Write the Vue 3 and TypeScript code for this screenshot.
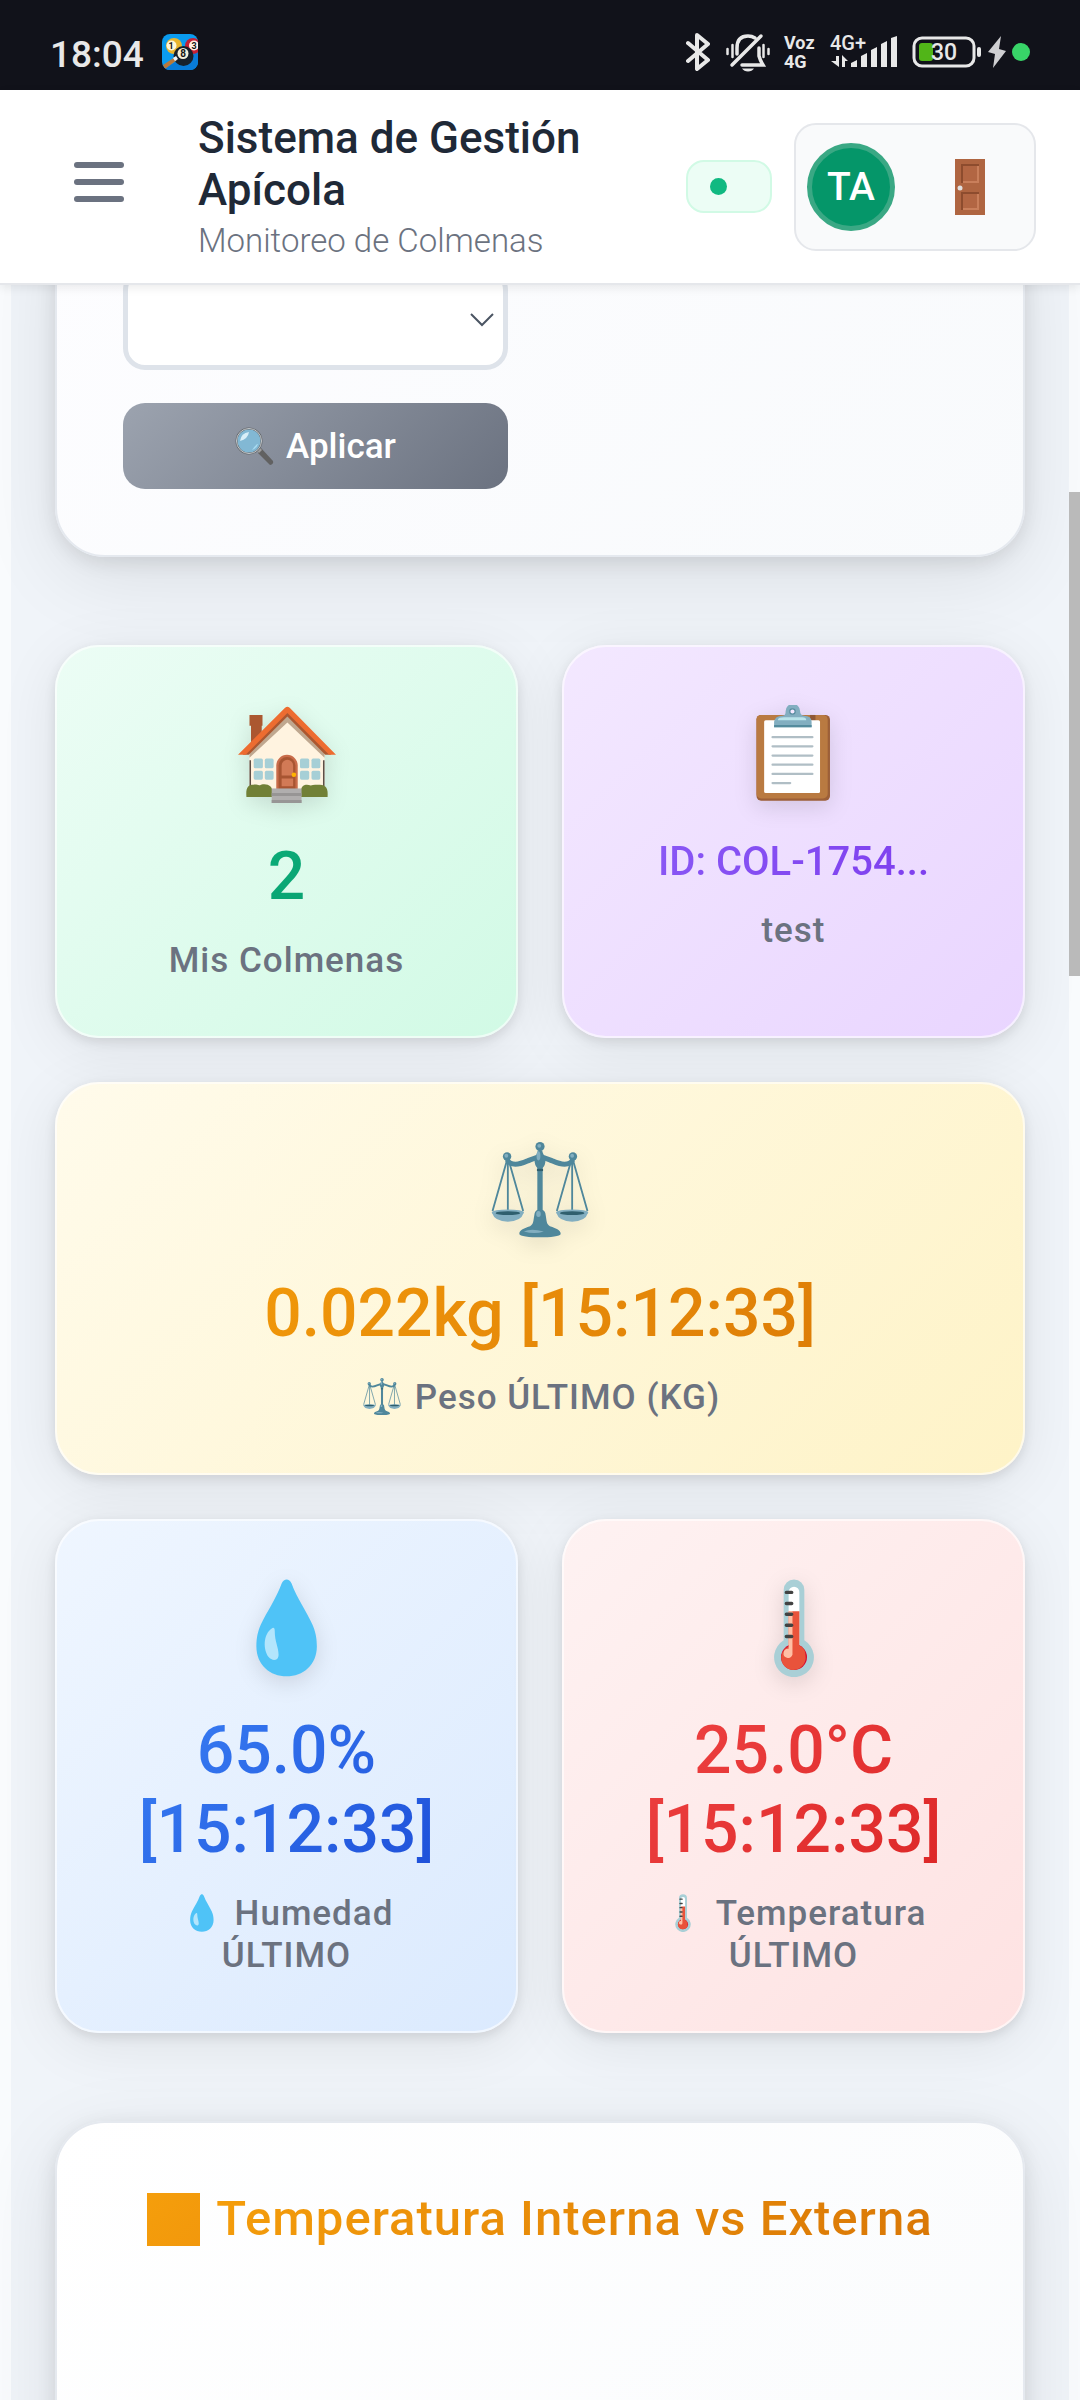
<script setup lang="ts">
import { ref } from 'vue'

interface StatCard {
  kind: 'hives' | 'hive' | 'weight' | 'humidity' | 'temperature'
  icon: string
  value: string
  label: string
  labelIcon?: string
}

const stats: StatCard[] = [
  { kind: 'hives', icon: 'house', value: '2', label: 'Mis Colmenas' },
  { kind: 'hive', icon: 'clipboard', value: 'ID: COL-1754...', label: 'test' },
  { kind: 'weight', icon: 'scales', value: '0.022kg [15:12:33]', label: 'Peso ÚLTIMO (KG)', labelIcon: 'scales' },
  { kind: 'humidity', icon: 'drop', value: '65.0% [15:12:33]', label: 'Humedad ÚLTIMO', labelIcon: 'drop' },
  { kind: 'temperature', icon: 'thermometer', value: '25.0°C [15:12:33]', label: 'Temperatura ÚLTIMO', labelIcon: 'thermometer' },
]

const filter = ref('')
</script>

<template>
  <div class="screen">
    <svg class="sprite" aria-hidden="true">
      <symbol id="house" viewBox="0 0 128 128">
        <path d="M15 13h17v14h-1v30H17V27h-2z" fill="#ab5730" />
        <path d="M15 66 64.500 22 113 66v46H15z" fill="#fff3e0" />
        <path d="M15 72h2v34h-2zM111 72h2v34h-2z" fill="#5d4e46" />
        <path d="M64.500 14 15 60v9l49.500-46L113 69v-9z" fill="#bfa78f" />
        <path d="M64.500 8 6 65h8l50.500-50L114 65h8z" fill="#ab5730" />
        <path d="M61.500 3.500q3-2.500 6 0L128 65h-9L64.500 10.500 10 65H0z" fill="#ed6c30" />
        <g fill="#a6cfd6">
          <rect x="20.500" y="70" width="12" height="12.500" rx="2" /><rect x="35" y="70" width="11.500" height="12.500" rx="2" />
          <rect x="20.500" y="86" width="12" height="11.500" rx="2" /><rect x="35" y="86" width="11.500" height="11.500" rx="2" />
          <rect x="81" y="70" width="12" height="12.500" rx="2" /><rect x="96" y="70" width="11.500" height="12.500" rx="2" />
          <rect x="81" y="86" width="12" height="11.500" rx="2" /><rect x="96" y="86" width="11.500" height="11.500" rx="2" />
        </g>
        <path d="M50 110V79a14 14 0 0 1 28 0v31z" fill="#c96c4a" />
        <path d="M53 110V79a11 11 0 0 1 22 0v31z" fill="#a85532" />
        <path d="M57 92V79a7 7 0 0 1 15 0v13zM57 96h15v10H57z" fill="#d27a56" />
        <circle cx="73" cy="91" r="3" fill="#ffb300" />
        <path d="M11 120c-1-12 2-16 9-16 5-1 7 2 10 0 9-2 15 2 15 9v7zM82 120v-8c1-8 7-9 13-7 4-1 7-1 12-1 8 0 11 5 10 16z" fill="#718036" />
        <path d="M44 109h39v19H44z" fill="#b0aeae" /><path d="M44 115h39v4H44zM44 124h39v4H44z" fill="#979595" />
      </symbol>
      <symbol id="clipboard" viewBox="0 0 128 128">
        <rect x="15" y="13" width="96" height="112" rx="6" fill="#9c5f38" />
        <rect x="15" y="13" width="93" height="109" rx="6" fill="#b97a41" />
        <path d="M85 13h7v16h-7z" fill="#8f5835" />
        <rect x="25" y="20" width="73" height="95" rx="2" fill="#fff" />
        <path d="M36 42h52M36 54h52M36 66h52M36 78h52M36 90h52M36 102h23" stroke="#b0bec5" stroke-width="3" stroke-linecap="round" />
        <path d="M38 29v-7q1-8 11-8c4-1 4-3 4-6a9.500 9.500 0 0 1 19 0c0 3 1 5 5 6q10 0 10 8v7z" fill="#82aec0" />
        <path d="M38 26h49v3H38z" fill="#548b9d" /><path d="M43 19q1-3 8-3h24q5 0 5 4H43z" fill="#b9e4ea" />
        <circle cx="62" cy="8.500" r="3.500" fill="#f3e8ff" stroke="#548b9d" stroke-width="1.500" />
      </symbol>
      <symbol id="scales" viewBox="0 0 128 128">
        <g fill="none" stroke="#4f879b">
          <path d="M22 20 2 90M22 20v72M22 20l20 70M106 20 86 90M106 20v72M106 20l20 70" stroke-width="2.400" />
          <path d="M21 23c5 9 17 6 26 2 8-3 11-5 17-5s9 2 17 5c9 4 21 7 26-2" stroke-width="6.500" />
          <path d="M64 30v64" stroke-width="7" />
        </g>
        <path d="M1 92h42q-4 12-21 12T1 92zM85 92h42q-4 12-21 12T85 92z" fill="#82aec0" />
        <ellipse cx="22" cy="92" rx="21" ry="4" fill="#82aec0" /><ellipse cx="106" cy="92" rx="21" ry="4" fill="#82aec0" />
        <ellipse cx="22" cy="93" rx="16" ry="2.500" fill="#2f5f6e" /><ellipse cx="106" cy="93" rx="16" ry="2.500" fill="#2f5f6e" />
        <circle cx="21" cy="19" r="5.500" fill="#4f879b" /><circle cx="107" cy="19" r="5.500" fill="#4f879b" />
        <circle cx="64" cy="6" r="6" fill="#4f879b" /><path d="M61 11h6c0 5 5 7 4 15q-1 8-7 9-6-1-7-9c-1-8 4-10 4-15z" fill="#4f879b" />
        <path d="M60 35h8v3h-8z" fill="#2f5f6e" />
        <path d="M57 93q1-5 7-5t7 5c2 10 1 14 6 17 9 3 14 5 14 10 0 6-54 6-54 0 0-5 5-7 14-10 5-3 4-7 6-17z" fill="#4f879b" />
        <path d="M43 117q9-5 26 0-12 4-26 0z" fill="#82aec0" /><ellipse cx="62" cy="94" rx="3" ry="4" fill="#82aec0" /><ellipse cx="62" cy="18" rx="2.500" ry="6" fill="#82aec0" />
        <circle cx="63" cy="5" r="2.500" fill="#82aec0" /><circle cx="20" cy="18" r="2.500" fill="#82aec0" /><circle cx="106" cy="18" r="2.500" fill="#82aec0" />
      </symbol>
      <symbol id="drop" viewBox="0 0 128 128">
        <path d="M57 6c3-7 10-7 13 0 7 19 19 36 27 53 4 9 6 17 6 29 0 24-18 39-39.500 39S24 112 24 88c0-12 2-20 6-29C38 43 50 25 57 6z" fill="#4fc3f7" />
        <path d="M45 64q3-1 3 4c0 14 5 21 5 31 0 9-9 8-13 3-7-9-8-30 5-38z" fill="#b3e5fc" />
      </symbol>
      <symbol id="thermometer" viewBox="0 0 128 128">
        <path d="M50.500 14a13.500 13.500 0 0 1 27 0v66a26 26 0 1 1-27 0z" fill="#a9cfd6" />
        <path d="M57 17a7 7 0 0 1 14 0v70H57z" fill="#fff" />
        <circle cx="64" cy="102" r="17" fill="#d50f30" />
        <path d="M57 88V42h14v45q8 4 8 13a16 16 0 1 1-22-12z" fill="#e9533b" />
        <path d="M57 42h5v57a6 6 0 1 1-5-8z" fill="#ffbfa5" />
        <path d="M54 17.500h7M54 32h7M54 46h7M54 60.500h7M54 75h7" stroke="#424242" stroke-width="4.500" stroke-linecap="round" />
      </symbol>
    </svg>

    <div class="status">
      <span class="clock">18:04</span>
      <svg class="game" width="36" height="36" viewBox="0 0 36 36" role="img" aria-label="Billar">
        <defs><clipPath id="game-clip"><rect width="36" height="36" rx="8" /></clipPath></defs>
        <g clip-path="url(#game-clip)">
          <path d="M0 0h36v36H0z" fill="#0a9bef" /><path d="M0 36 36 14v22z" fill="#087bd8" />
          <circle cx="12" cy="12" r="8" fill="#e9b52e" /><circle cx="9.500" cy="11.500" r="5" fill="#fff7d8" />
          <circle cx="31" cy="12" r="8" fill="#c32035" /><circle cx="32" cy="11.500" r="5" fill="#fff0e6" />
          <circle cx="21.500" cy="22" r="10" fill="#17202b" /><circle cx="21" cy="19.500" r="5.500" fill="#f3efd9" />
          <path d="m1 31 12-8 2 3L3 35z" fill="#ba7839" /><path d="m11 24 3-2 2 3-3 2z" fill="#eef4f8" />
          <g font-family="Roboto, sans-serif" font-weight="700" text-anchor="middle" fill="#161616">
            <text x="9" y="15" font-size="9">1</text><text x="32" y="15" font-size="9">3</text><text x="21" y="23" font-size="10">8</text>
          </g>
        </g>
      </svg>
      <div class="system">
        <svg width="24" height="40" viewBox="0 0 24 40" fill="none" stroke="#e8e8e8" stroke-width="4" stroke-linejoin="round" stroke-linecap="round" role="img" aria-label="Bluetooth">
          <path d="m2 11 20 17-11 9V3l11 9L2 29" />
        </svg>
        <svg class="bell" width="44" height="40" viewBox="0 0 44 40" fill="none" stroke="#e8e8e8" stroke-linecap="round" role="img" aria-label="Silencio">
          <path d="M11 22v-6C11 8 15 4 22 4q4 0 7 2M33 16v8q1 4 4 9H16" stroke-width="3.500" />
          <path d="M6 33 35 4" stroke-width="3.500" />
          <path d="M1.500 17v5M6.500 13v12M37.500 13v12M42.500 17v5" stroke-width="2.500" />
          <path d="M16 36.500h12q-2 3-6 3t-6-3z" fill="#e8e8e8" stroke="none" />
        </svg>
        <span class="volte"><span>Voz</span><span>4G</span></span>
        <div class="signal">
          <span>4G+</span>
          <svg width="68" height="32" viewBox="0 0 68 32" fill="#e8e8e8" aria-hidden="true">
            <path d="m21 27 6-3v7h-6zM31 20l6-3v14h-6zM41 14l6-3v20h-6zM51 8l6-3v26h-6zM61 2l6-2v31h-6z" />
            <path d="M6 20h3v11L1 25h5zM12 31h3v-6h3l-6-6z" />
          </svg>
        </div>
        <div class="battery">
          <svg width="70" height="32" viewBox="0 0 70 32" aria-hidden="true">
            <rect x="2" y="2" width="60" height="28" rx="8" fill="none" stroke="#e8e8e8" stroke-width="3" />
            <rect x="7" y="7" width="14" height="18" rx="3" fill="#51b518" />
            <rect x="65" y="11" width="4" height="10" rx="2" fill="#e8e8e8" />
          </svg>
          <span>30</span>
        </div>
        <svg class="bolt" width="18" height="32" viewBox="0 0 18 32" aria-hidden="true"><path d="M13 0 0 16l7 2-2 14 13-17-7-2 2-13z" fill="#cfcfd2" /></svg>
        <i class="live"></i>
      </div>
    </div>

    <header class="topbar">
      <button class="menu" type="button" aria-label="Menú"><i></i><i></i><i></i></button>
      <div class="brand">
        <h1>Sistema de Gestión Apícola</h1>
        <p>Monitoreo de Colmenas</p>
      </div>
      <div class="online" role="status" aria-label="Conectado"><i></i></div>
      <div class="user">
        <span class="avatar">TA</span>
        <button class="logout" type="button" aria-label="Salir">
          <svg width="30" height="56" viewBox="0 0 30 56">
            <path d="M0 0h30v56H0z" fill="#af6541" />
            <path d="M6 5h18v19H6zM6 33h18v18H6z" fill="#8d4c2e" />
            <path d="M8 7h16v17H8zM8 35h16v16H8z" fill="#c97f5b" />
            <path d="M8 7h14v15H8zM8 35h14v14H8z" fill="#b26643" />
            <circle cx="5" cy="29" r="2.500" fill="#e0e0e0" />
          </svg>
        </button>
      </div>
    </header>

    <div class="viewport">
      <main class="content">
        <form class="panel filters" @submit.prevent>
          <div class="select-wrap">
            <select v-model="filter" aria-label="Colmena"><option value=""></option></select>
            <svg width="24" height="14" viewBox="0 0 24 14" fill="none" stroke="#4b5563" stroke-width="2" aria-hidden="true"><path d="m1 1 11 11L23 1" /></svg>
          </div>
          <button class="apply" type="submit">
            <svg width="40" height="40" viewBox="0 0 40 40" aria-hidden="true">
              <path d="m23 24 3-2 12 13q1 3-3 4L23 27z" fill="#616161" /><path d="m21 24 3-3 3 3-3 3z" fill="#9e9e9e" />
              <circle cx="14" cy="15" r="12.500" fill="#82b8d4" stroke="#606468" stroke-width="2" />
              <circle cx="14" cy="15" r="12.500" fill="none" stroke="#c5c9cc" stroke-width="1" />
              <path d="M5 15q1-8 9-9-1 7-9 9z" fill="#d8eef8" /><path d="M17 24q5-2 6-6-1-1-6 6z" fill="#a9dcf2" />
            </svg>
            <span>Aplicar</span>
          </button>
        </form>

        <section class="stats">
          <article v-for="card in stats" :key="card.kind" class="stat" :class="card.kind">
            <svg class="emoji" aria-hidden="true"><use :href="'#' + card.icon" /></svg>
            <strong class="value">{{ card.value }}</strong>
            <p class="label"><svg v-if="card.labelIcon" class="mini" aria-hidden="true"><use :href="'#' + card.labelIcon" /></svg>{{ card.label }}</p>
          </article>
        </section>

        <section class="panel chart">
          <h2><i></i><span>Temperatura Interna vs Externa</span></h2>
        </section>
      </main>
      <div class="thumb"></div>
    </div>
  </div>
</template>

<style>
body { margin: 0; background: #f9fbfd; }
</style>

<style scoped>
* { box-sizing: border-box; }
.screen {
  height: 100vh;
  display: flex;
  flex-direction: column;
  overflow: hidden;
  background: #f9fbfd;
  font-family: Roboto, "Liberation Sans", sans-serif;
  color: #1f2937;
}
h1, h2, p { margin: 0; font-weight: 500; }
button { border: 0; padding: 0; font: inherit; background: none; }
svg { flex: none; }
.sprite { position: absolute; width: 0; height: 0; }

.status {
  flex: none;
  height: 90px;
  padding: 14px 50px 0 50px;
  display: flex;
  align-items: center;
  background: #11121a;
  color: #e8e8e8;
}
.clock { padding-top: 6px; font-size: 37px; line-height: 40px; font-weight: 500; }
.game { margin-left: 18px; }
.system { margin-left: auto; display: flex; align-items: center; }
.bell { margin: 0 14px 0 16px; }
.volte { width: 34px; display: flex; flex-direction: column; font-size: 18px; line-height: 19px; font-weight: 700; margin-right: 12px; }
.signal { position: relative; display: flex; }
.signal span { position: absolute; left: 0; top: -2px; font-size: 20px; line-height: 18px; font-weight: 500; }
.battery { position: relative; display: flex; margin: 0 6px 0 14px; }
.battery span { position: absolute; left: 19px; top: 4px; font-size: 23px; line-height: 26px; font-weight: 500; }
.live { width: 18px; height: 18px; margin-left: 6px; border-radius: 50%; background: #38d468; }

.topbar {
  position: relative;
  z-index: 2;
  flex: none;
  display: flex;
  align-items: center;
  padding: 22px 44px 22px 55px;
  background: #fff;
  border-bottom: 2px solid #e5e7eb;
  box-shadow: 0 3px 9px rgba(0, 0, 0, 0.08);
}
.menu { width: 88px; height: 88px; margin-bottom: 10px; display: flex; flex-direction: column; align-items: center; justify-content: center; gap: 11px; }
.menu i { width: 50px; height: 6px; border-radius: 3px; background: #6b7280; }
.brand { flex: 1; min-width: 0; margin-left: 55px; }
.brand h1 { font-size: 44px; line-height: 52px; }
.brand p { padding-top: 5px; font-size: 33px; line-height: 40px; font-weight: 300; color: #6b7280; }
.online { width: 86px; height: 53px; padding-left: 22px; display: flex; align-items: center; border: 2px solid #d1fae5; border-radius: 18px; background: #ecfdf5; }
.online i { width: 17px; height: 17px; border-radius: 50%; background: #10b981; }
.user { width: 242px; height: 128px; margin-left: 22px; padding: 0 49px 0 11px; display: flex; align-items: center; justify-content: space-between; border: 2px solid #e5e7eb; border-radius: 22px; background: #f9fafb; }
.avatar { width: 88px; height: 88px; display: grid; place-items: center; border: 5px solid #3aa884; border-radius: 50%; background: #059669; color: #fff; font-size: 39px; font-weight: 500; }
.logout { display: flex; }

.viewport { position: relative; flex: 1; min-height: 0; overflow: hidden; padding: 0 11px; }
.content { min-height: 100%; margin-top: -85px; padding: 0 44px; background: #f0f4f9; }
.panel {
  border: 2px solid #e5e9ef;
  border-radius: 50px;
  background: linear-gradient(135deg, #fff, #f8fafc);
  box-shadow: 0 20px 80px rgba(0, 0, 0, 0.09), 0 5px 20px rgba(0, 0, 0, 0.1);
}
.filters { padding: 66px; display: grid; grid-template-columns: 385px; gap: 33px; background: linear-gradient(135deg, #fdfdff, #f8fafc); }
.select-wrap { position: relative; display: grid; }
.select-wrap select { height: 102px; appearance: none; border: 5px solid #dee3ea; border-radius: 22px; background: #fff; font: inherit; }
.select-wrap svg { position: absolute; right: 14px; top: 45px; }
.apply {
  height: 86px;
  display: flex;
  align-items: center;
  justify-content: center;
  gap: 11px;
  border-radius: 22px;
  background: linear-gradient(135deg, #9ca3af, #6b7280);
  color: #fff;
  font-size: 35px;
  font-weight: 500;
}

.stats { display: grid; grid-template-columns: 1fr 1fr; gap: 44px; margin: 88px 0; }
.stat {
  padding: 55px 55px 54px;
  display: flex;
  flex-direction: column;
  align-items: center;
  text-align: center;
  border: 2px solid rgba(255, 255, 255, 0.6);
  border-radius: 44px;
  background: linear-gradient(135deg, var(--from), var(--to)) border-box;
  box-shadow: 0 11px 60px rgba(0, 0, 0, 0.08), 0 4px 12px rgba(0, 0, 0, 0.1);
}
.hives { --from: #ecfdf5; --to: #d1fae5; --ink: #10b981; --ink-end: #059669; }
.hive { --from: #f3e8ff; --to: #e9d5ff; --ink: #8b5cf6; --ink-end: #7c3aed; }
.weight { --from: #fffbeb; --to: #fef3c7; --ink: #f59e0b; --ink-end: #d97706; grid-column: 1 / -1; }
.humidity { --from: #eff6ff; --to: #dbeafe; --ink: #3b82f6; --ink-end: #1d4ed8; }
.temperature { --from: #fef2f2; --to: #fee2e2; --ink: #ef4444; --ink-end: #dc2626; }
.emoji { width: 98px; height: 98px; margin: 3px 0 34px; overflow: visible; filter: drop-shadow(0 6px 11px rgba(0, 0, 0, 0.12)); }
.value {
  align-self: stretch;
  font-size: 66px;
  line-height: 79px;
  font-weight: 500;
  background: linear-gradient(135deg, var(--ink), var(--ink-end));
  background-clip: text;
  -webkit-background-clip: text;
  color: transparent;
}
.hive .value { font-size: 40px; line-height: 49px; }
.label { margin-top: 24px; font-size: 35px; line-height: 42px; letter-spacing: 1px; color: #6b7280; }
.mini { width: 44px; height: 38px; margin-right: 11px; vertical-align: -7px; }

.chart { min-height: 900px; padding: 67px 66px; }
.chart h2 {
  display: flex;
  align-items: center;
  justify-content: center;
  gap: 16px;
  font-size: 49px;
  line-height: 58px;
  letter-spacing: 1px;
  color: transparent;
}
.chart i { width: 53px; height: 53px; background: linear-gradient(135deg, #f59e0b, #f2980c); }
.chart span { background: linear-gradient(135deg, #f59e0b, #d97706); background-clip: text; -webkit-background-clip: text; }
.thumb { position: absolute; right: 0; top: 207px; width: 11px; height: 484px; background: #bababa; }
</style>
